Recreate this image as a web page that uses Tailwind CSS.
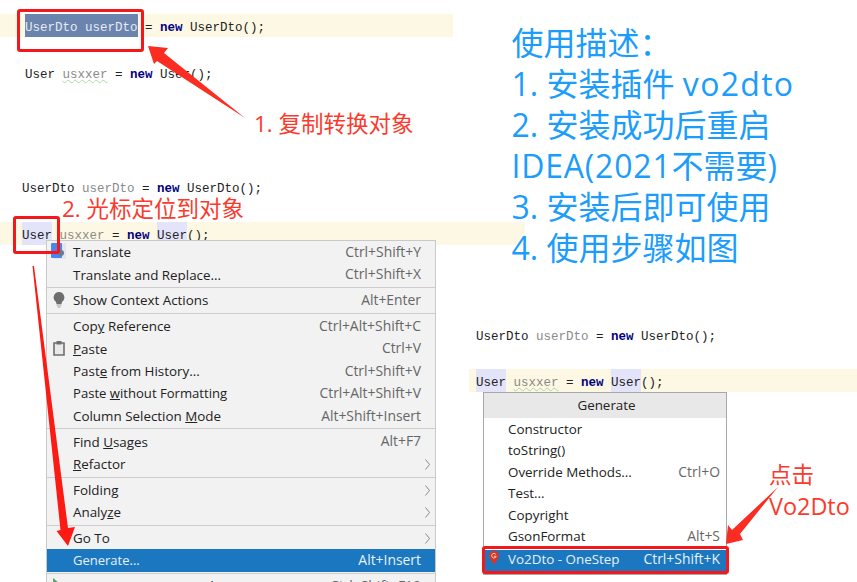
<!DOCTYPE html>
<html lang="en">
<head>
<meta charset="UTF-8">
<title>vo2dto usage</title>
<script src="https://cdn.jsdelivr.net/npm/@tailwindcss/browser@4"></script>
</head>
<body class="bg-white">
<div class="relative w-[857px] h-[582px] overflow-hidden bg-white font-['Open_Sans','Noto_Sans_CJK_SC',sans-serif]">

  <!-- step 1 code -->
  <div class="absolute left-0 top-[14px] w-[453px] h-[23px] bg-[#fdf8e3]"></div>
  <div class="absolute left-[25px] top-[14px] h-[23px] whitespace-pre font-['Liberation_Mono',monospace] text-[12.5px] leading-[28px] text-[#222]"><span class="inline-block h-[23px] bg-[#6b84ae] text-[#e6ebf3]">UserDto userDto</span> = <b class="text-[#000080]">new</b> UserDto();</div>
  <div class="absolute left-[25px] top-[64px] h-[23px] whitespace-pre font-['Liberation_Mono',monospace] text-[12.5px] leading-[23px] text-[#222]">User <span class="text-[#8a8a8a] underline decoration-wavy decoration-[#a9d8a4] decoration-1">usxxer</span> = <b class="text-[#000080]">new</b> User();</div>
  <div class="absolute left-[17px] top-[9px] w-[127px] h-[43px] border-[3px] border-[#f5181b] rounded-[3px]"></div>
  <p class="absolute left-[254px] top-[109px] text-[22.5px] leading-[30px] text-[#fb3a2e] whitespace-nowrap">1. 复制转换对象</p>

  <!-- step 2 code -->
  <div class="absolute left-[22px] top-[178px] h-[23px] whitespace-pre font-['Liberation_Mono',monospace] text-[12.5px] leading-[23px] text-[#222]">UserDto <span class="text-[#8a8a8a]">userDto</span> = <b class="text-[#000080]">new</b> UserDto();</div>
  <p class="absolute left-[62px] top-[194px] text-[22.5px] leading-[30px] text-[#fb3a2e] whitespace-nowrap">2. 光标定位到对象</p>
  <div class="absolute left-0 top-[222px] w-[525px] h-[23px] bg-[#fdf8e3]"></div>
  <div class="absolute left-[22px] top-[222px] h-[23px] whitespace-pre font-['Liberation_Mono',monospace] text-[12.5px] leading-[28px] text-[#222]"><span class="inline-block h-[23px] bg-[#e3e3fa]">User</span> <span class="text-[#8a8a8a]">usxxer</span> = <b class="text-[#000080]">new</b> <span class="inline-block h-[23px] bg-[#e3e3fa]">User</span>();</div>

  <!-- context menu -->
  <div class="absolute left-[46px] top-[240px] w-[390px] h-[350px] bg-[#f2f2f2] border border-[#c9c9c9] text-[13.4px] text-[#222]">
    <div class="relative h-[22.5px] pl-[26px] pr-[14px] flex items-center justify-between"><span>Translate</span><span class="text-[13.9px] text-[#666]">Ctrl+Shift+Y</span>
      <svg class="absolute left-[3px] top-[2px]" width="16" height="18" viewBox="0 0 16 18"><rect x="4" width="12" height="16" fill="#e6e6e6"/><rect x="1" width="11" height="15" rx="1" fill="#4a86f0"/><circle cx="11" cy="10" r="3" fill="#6a7a94"/></svg>
    </div>
    <div class="h-[22.5px] pl-[26px] pr-[14px] flex items-center justify-between"><span>Translate and Replace...</span><span class="text-[13.9px] text-[#666]">Ctrl+Shift+X</span></div>
    <div class="my-[1.1px] h-px bg-[#cdcdcd]"></div>
    <div class="relative h-[22.5px] pl-[26px] pr-[14px] flex items-center justify-between"><span>Show Context Actions</span><span class="text-[13.9px] text-[#666]">Alt+Enter</span>
      <svg class="absolute left-[6px] top-[3px]" width="12" height="16" viewBox="0 0 12 16"><path d="M6 0a5.500 5.500 0 0 0-3 10l.500 2h5l.500-2A5.500 5.500 0 0 0 6 0z" fill="#6e6e6e"/><path d="M3.500 13h5M4.500 15h3" stroke="#9a9a9a" stroke-width="1.200"/></svg>
    </div>
    <div class="my-[1.1px] h-px bg-[#cdcdcd]"></div>
    <div class="h-[22.5px] pl-[26px] pr-[14px] flex items-center justify-between"><span>Cop<u>y</u> Reference</span><span class="text-[13.9px] text-[#666]">Ctrl+Alt+Shift+C</span></div>
    <div class="relative h-[22.5px] pl-[26px] pr-[14px] flex items-center justify-between"><span><u>P</u>aste</span><span class="text-[13.9px] text-[#666]">Ctrl+V</span>
      <svg class="absolute left-[6px] top-[3px]" width="12" height="16" viewBox="0 0 12 16"><path d="M1 3h10v12H1z" fill="#e9e9e9" stroke="#6e6e6e" stroke-width="1.600"/><path d="M3.500 1h5v3.500h-5z" fill="#6e6e6e"/></svg>
    </div>
    <div class="h-[22.5px] pl-[26px] pr-[14px] flex items-center justify-between"><span>Past<u>e</u> from History...</span><span class="text-[13.9px] text-[#666]">Ctrl+Shift+V</span></div>
    <div class="h-[22.5px] pl-[26px] pr-[14px] flex items-center justify-between"><span class="text-[13.1px]">Paste <u>w</u>ithout Formatting</span><span class="text-[13.9px] text-[#666]">Ctrl+Alt+Shift+V</span></div>
    <div class="h-[22.5px] pl-[26px] pr-[14px] flex items-center justify-between"><span>Column Selection <u>M</u>ode</span><span class="text-[13.9px] text-[#666]">Alt+Shift+Insert</span></div>
    <div class="my-[1.1px] h-px bg-[#cdcdcd]"></div>
    <div class="h-[22.5px] pl-[26px] pr-[14px] flex items-center justify-between"><span>Find <u>U</u>sages</span><span class="text-[13.9px] text-[#666]">Alt+F7</span></div>
    <div class="h-[22.5px] pl-[26px] pr-[14px] flex items-center justify-between"><span><u>R</u>efactor</span><svg class="-mr-[9px]" width="5" height="11" viewBox="0 0 5 11"><path d="M.5.5l4 5-4 5" fill="none" stroke="#8a8a8a"/></svg></div>
    <div class="my-[1.1px] h-px bg-[#cdcdcd]"></div>
    <div class="h-[22.5px] pl-[26px] pr-[14px] flex items-center justify-between"><span>Folding</span><svg class="-mr-[9px]" width="5" height="11" viewBox="0 0 5 11"><path d="M.5.5l4 5-4 5" fill="none" stroke="#8a8a8a"/></svg></div>
    <div class="h-[22.5px] pl-[26px] pr-[14px] flex items-center justify-between"><span>Analy<u>z</u>e</span><svg class="-mr-[9px]" width="5" height="11" viewBox="0 0 5 11"><path d="M.5.5l4 5-4 5" fill="none" stroke="#8a8a8a"/></svg></div>
    <div class="my-[1.1px] h-px bg-[#cdcdcd]"></div>
    <div class="h-[22.5px] pl-[26px] pr-[14px] flex items-center justify-between"><span>Go To</span><svg class="-mr-[9px]" width="5" height="11" viewBox="0 0 5 11"><path d="M.5.5l4 5-4 5" fill="none" stroke="#8a8a8a"/></svg></div>
    <div class="h-[22.5px] pl-[26px] pr-[14px] flex items-center justify-between bg-[#1b78c0] text-[#e8f1f8]"><span class="text-[13px]">Generate...</span><span class="text-[13.9px]">Alt+Insert</span></div>
    <div class="my-[1.1px] h-px bg-[#cdcdcd]"></div>
    <div class="relative h-[22.5px] pl-[26px] pr-[14px] flex items-center justify-between"><span>Run 'ApiTest.test_vo2dto()'</span><span class="text-[13.9px] text-[#666]">Ctrl+Shift+F10</span>
      <svg class="absolute left-[6px] top-[3px]" width="6" height="10" viewBox="0 0 6 10"><path d="M0 0l6 5-6 5z" fill="#59a869"/></svg>
    </div>
  </div>

  <!-- usage text -->
  <div class="absolute left-[511.5px] top-[22px] text-[32px] leading-[41px] text-[#1c9dfb] whitespace-nowrap">
    <p>使用描述：</p>
    <p>1. 安装插件 <span class="tracking-[1.3px]">vo2dto</span></p>
    <p>2. 安装成功后重启</p>
    <p><span class="tracking-[0.8px]">IDEA(2021</span>不需要)</p>
    <p>3. 安装后即可使用</p>
    <p>4. 使用步骤如图</p>
  </div>

  <!-- step 3 code -->
  <div class="absolute left-[476px] top-[325px] h-[23px] whitespace-pre font-['Liberation_Mono',monospace] text-[12.5px] leading-[25px] text-[#222]">UserDto <span class="text-[#8a8a8a]">userDto</span> = <b class="text-[#000080]">new</b> UserDto();</div>
  <div class="absolute left-[469px] top-[369px] w-[388px] h-[23px] bg-[#fdf8e3]"></div>
  <div class="absolute left-[476px] top-[369px] h-[23px] whitespace-pre font-['Liberation_Mono',monospace] text-[12.5px] leading-[29px] text-[#222]"><span class="inline-block h-[23px] bg-[#e3e3fa]">User</span> <span class="text-[#8a8a8a] underline decoration-wavy decoration-[#a9d8a4] decoration-1">usxxer</span> = <b class="text-[#000080]">new</b> <span class="inline-block h-[23px] bg-[#e3e3fa]">User</span>();</div>

  <!-- generate popup -->
  <div class="absolute left-[483px] top-[392px] w-[244px] bg-white border border-[#a8a8a8] text-[13.4px] text-[#222]">
    <div class="h-[25px] pl-[3px] bg-[#e8e8e8] flex items-center justify-center">Generate</div>
    <div class="h-[22px] pl-[24px] pr-[6px] flex items-center justify-between"><span>Constructor</span></div>
    <div class="h-[21px] pl-[24px] pr-[6px] flex items-center justify-between"><span>toString()</span></div>
    <div class="h-[22px] pl-[24px] pr-[6px] flex items-center justify-between"><span>Override Methods...</span><span class="text-[13.9px] text-[#666]">Ctrl+O</span></div>
    <div class="h-[21px] pl-[24px] pr-[6px] flex items-center justify-between"><span>Test...</span></div>
    <div class="h-[22px] pl-[24px] pr-[6px] flex items-center justify-between"><span>Copyright</span></div>
    <div class="h-[21px] pl-[24px] pr-[6px] flex items-center justify-between"><span>GsonFormat</span><span class="text-[13.9px] text-[#666]">Alt+S</span></div>
    <div class="h-[21px] mt-[3px] pb-[3px] pl-[24px] pr-[6px] flex items-center justify-between bg-[#1b78c0] text-[#e8f1f8]"><span>Vo2Dto - OneStep</span><span class="text-[13.9px]">Ctrl+Shift+K</span></div>
    <div class="h-[3px]"></div>
  </div>
  <svg class="absolute left-[488px] top-[550px]" width="12" height="15" viewBox="0 0 12 15"><path d="M6 14.500C3 10.500 1 8.500 1 5.800a5 5 0 0 1 10 0c0 2.700-2 4.700-5 8.700z" fill="#d9362b"/><path d="M7.800 4.300a2.300 2.300 0 1 0 .4 2H6" fill="none" stroke="#f6cdbf" stroke-width="1"/></svg>
  <div class="absolute left-[482px] top-[546px] w-[247px] h-[28px] border-[3px] border-[#f5181b] rounded-[3px]"></div>
  <p class="absolute left-[769px] top-[460px] text-[22.5px] leading-[30px] text-[#fb3a2e] whitespace-nowrap">点击</p>
  <p class="absolute left-[769px] top-[491px] text-[23.4px] leading-[30px] text-[#fb3a2e] whitespace-nowrap">Vo2Dto</p>

  <!-- red box on User and the arrows -->
  <div class="absolute left-[13px] top-[216px] w-[47px] h-[38px] border-[3px] border-[#f5181b] rounded-[3px]"></div>
  <svg class="absolute inset-0" width="857" height="582" viewBox="0 0 857 582">
    <path d="M148 46 168 48 164 53 245 118 157 61 154 64z" fill="#fb2c22"/>
    <path d="M32.500 266 34 266 68 528 75 527 68 546 56.500 531 60.500 530z" fill="#fb1a14"/>
    <path d="M778 487 740 534 743 540 726 544 728 525 732 530z" fill="#fb2c22"/>
  </svg>
</div>
</body>
</html>
